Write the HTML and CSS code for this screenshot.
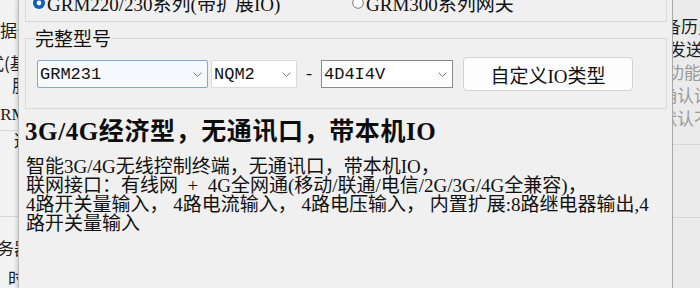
FILE: index.html
```html
<!DOCTYPE html>
<html>
<head>
    <meta charset="utf-8">
    <link rel="stylesheet" href="styles.css">
</head>

<body>
<div class="screen">
    <!-- main window behind the dialog, left part -->
    <div class="side side-left">
        <div class="side-block side-block-top">
            <div class="side-row">据一</div>
            <div class="side-row gap-lg cut-13">式(基</div>
            <div class="side-row in-12">服务</div>
            <div class="side-row gap-sm cut-12 latin">GRM</div>
        </div>
        <div class="side-block side-block-mid">
            <div class="side-row short in-14">这</div>
        </div>
        <div class="side-block side-block-end">
            <div class="side-row cut-3">务器</div>
            <div class="side-row gap-sm in-8">时间</div>
        </div>
    </div>

    <div class="dialog">
        <div class="radio-group">
            <label class="radio">
                <svg viewBox="0 0 12 12"><circle cx="6" cy="6" r="6" fill="#0b5fb5"/><circle cx="6" cy="6" r="2.4" fill="#fff"/></svg>
                GRM220/230系列(带扩展IO)
            </label>
            <label class="radio">
                <svg viewBox="0 0 12 12"><circle cx="6" cy="6" r="5.3" fill="#fff" stroke="#6b6b6b" stroke-width="0.9"/></svg>
                GRM300系列网关
            </label>
        </div>

        <fieldset class="model-box">
            <legend>完整型号</legend>
            <div class="model-row">
                <div class="combo combo-series">
                    <span>GRM231</span>
                    <svg viewBox="0 0 9 5"><path d="M0.5 0.5 L4.5 4.5 L8.5 0.5"/></svg>
                </div>
                <div class="combo combo-net">
                    <span>NQM2</span>
                    <svg viewBox="0 0 9 5"><path d="M0.5 0.5 L4.5 4.5 L8.5 0.5"/></svg>
                </div>
                <span class="dash">-</span>
                <div class="combo combo-io">
                    <span>4D4I4V</span>
                    <svg viewBox="0 0 9 5"><path d="M0.5 0.5 L4.5 4.5 L8.5 0.5"/></svg>
                </div>
                <button class="io-button">自定义IO类型</button>
            </div>
        </fieldset>

        <h3 class="model-title">3G/4G经济型，无通讯口，带本机IO</h3>
        <p class="model-desc">智能3G/4G无线控制终端，无通讯口，带本机IO，<br>联网接口：有线网 &nbsp;+&nbsp; 4G全网通(移动/联通/电信/2G/3G/4G全兼容)，<br>4路开关量输入， 4路电流输入， 4路电压输入， 内置扩展:8路继电器输出,4<br>路开关量输入</p>
    </div>

    <!-- main window behind the dialog, right part -->
    <div class="side side-right">
        <div class="side-block side-block-top">
            <div class="side-row cut-26">设备历史</div>
            <div class="side-row cut-4">发送数据</div>
            <div class="side-row cut-6 muted">功能设置</div>
            <div class="side-row cut-13 muted">确认设置</div>
            <div class="side-row cut-13 muted">默认不发</div>
        </div>
        <div class="side-block side-block-mid"></div>
    </div>
</div>
</body>

</html>
```

FILE: styles.css
```css
/* General page */
* {
    box-sizing: border-box;
}

body {
    margin: 0;
    width: 700px;
    height: 288px;
    overflow: hidden;
    background-color: #f0f0f0;
    color: #111;
    font-family: "Liberation Serif", "Noto Sans CJK SC", serif;
}

.screen {
    display: flex;
    height: 288px;
}

/* Window behind the dialog */
.side {
    flex: none;
    overflow: hidden;
    white-space: nowrap;
    font-family: "Noto Sans CJK SC", sans-serif;
    font-size: 17px;
    color: #1b1b1b;
}

.side-left {
    width: 18px;
    background-color: #f2f2f2;
}

.side-right {
    width: 27px;
    background-color: #ebebeb;
}

.side-block {
    overflow: hidden;
    border-bottom: 1px solid #d6d6d6;
}

.side-block-end {
    border-bottom: none;
    padding-top: 20px;
}

.side-left .side-block-top {
    height: 131px;
    padding-top: 19px;
}

.side-left .side-block-mid {
    height: 86px;
}

.side-right .side-block-top {
    height: 145px;
    padding-top: 14px;
}

.side-right .side-block-top .side-row {
    height: 23px;
    line-height: 23px;
}

.side-right .side-block-mid {
    height: 73px;
}

.side-row {
    height: 22px;
    line-height: 22px;
    overflow: hidden;
}

.side-row.short {
    height: 18px;
    line-height: 18px;
}

.side-row.latin {
    font-family: "Liberation Serif", serif;
}

.side-row.muted {
    color: #9a9a9a;
}

.gap-lg { margin-top: 11px; }
.gap-sm { margin-top: 8px; }

.cut-3 { text-indent: -3px; }
.cut-4 { text-indent: -4px; }
.cut-6 { text-indent: -6px; }
.cut-12 { text-indent: -12px; }
.cut-13 { text-indent: -13px; }
.cut-26 { text-indent: -26px; }
.in-8 { text-indent: 8px; }
.in-12 { text-indent: 12px; }
.in-14 { text-indent: 14px; }

/* Dialog */
.dialog {
    flex: 1;
    min-width: 0;
    padding: 0 5px 0 6px;
    background-color: #f0f0f0;
    border-left: 1px solid #bdbdbd;
    border-right: 1px solid #a9a9a9;
    box-shadow: -2px 0 3px rgba(0, 0, 0, 0.12);
}

.radio-group {
    display: grid;
    grid-template-columns: 319px auto;
    margin-top: -16px;
    padding: 10px 0 6px 7px;
    border: 1px solid #d9d9d9;
    font-size: 19px;
    line-height: 20px;
}

.radio {
    display: flex;
    align-items: center;
    gap: 2px;
}

.radio svg {
    flex: none;
    width: 12px;
    height: 12px;
    transform: translateY(-2px);
}

/* Model group box */
.model-box {
    margin: 6px 0 0;
    padding: 9px 0 17px 11px;
    min-width: 0;
    border: 1px solid #d9d9d9;
}

.model-box legend {
    margin-left: -2px;
    padding: 0;
    font-family: "Noto Sans CJK SC", sans-serif;
    font-size: 19px;
    line-height: 20px;
}

.model-row {
    display: flex;
    align-items: center;
}

.combo {
    display: flex;
    align-items: center;
    justify-content: space-between;
    height: 28px;
    padding: 0 5px 0 2px;
    background-color: #fff;
    border: 1px solid #dadada;
    font-family: "Liberation Mono", monospace;
    font-size: 17px;
}

.combo svg {
    width: 9px;
    height: 5px;
    fill: none;
    stroke: #7c7c7c;
    stroke-width: 1;
}

.combo-series {
    width: 171px;
    background-color: #f6f9fe;
    border-color: #7aaae0;
    border-radius: 2px;
}

.combo-net {
    width: 86px;
    margin-left: 3px;
    border-radius: 2px;
}

.combo-io {
    width: 132px;
    border-color: #8a8a8a;
}

.dash {
    width: 24px;
    text-align: center;
    font-family: "Liberation Mono", monospace;
    font-size: 17px;
}

.io-button {
    width: 170px;
    height: 34px;
    margin-left: 10px;
    padding: 0;
    background-color: #fdfdfd;
    border: 1px solid #d3d3d3;
    border-radius: 4px;
    color: #111;
    font-family: "Liberation Serif", "Noto Sans CJK SC", serif;
    font-size: 19px;
}

/* Model description */
.model-title {
    margin: 8px 0 0;
    font-size: 25px;
    line-height: 30px;
    font-weight: bold;
    letter-spacing: 0.6px;
    color: #0d0d0d;
}

.model-desc {
    margin: 10px 0 0 1px;
    font-size: 19px;
    line-height: 19px;
    white-space: nowrap;
}
```
